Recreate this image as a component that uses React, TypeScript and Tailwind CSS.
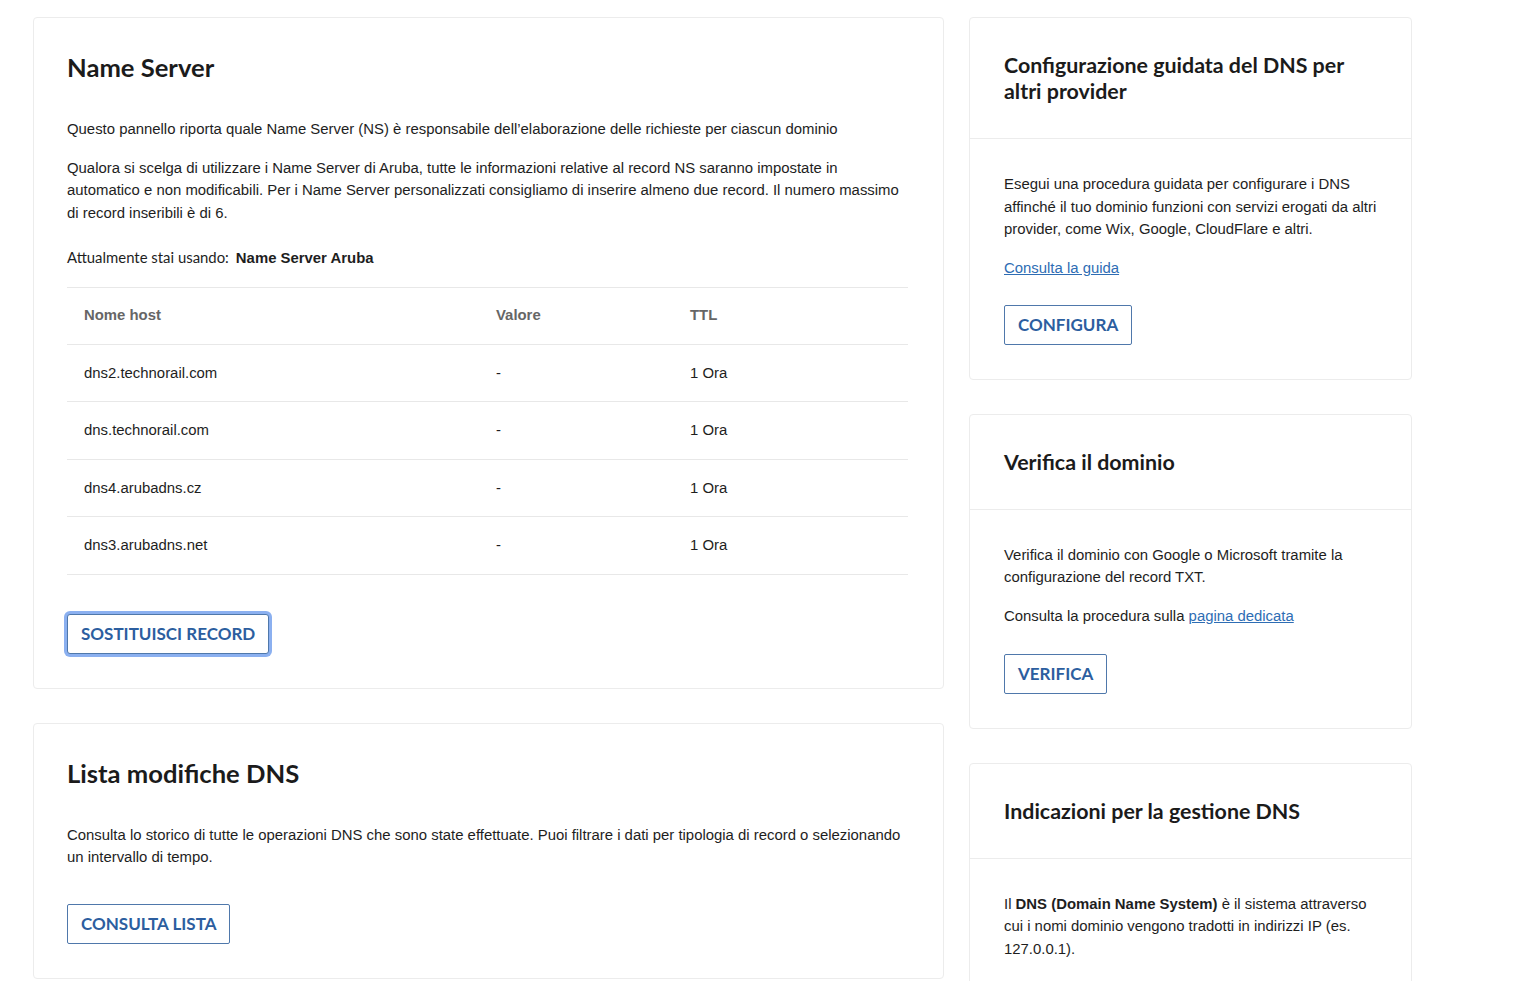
import React from "react";

const lato = { fontFamily: "Lato, 'Open Sans', sans-serif" };

function Btn({ children, focus = false }: { children: React.ReactNode; focus?: boolean }) {
  return (
    <button
      className={
        "h-[40px] px-[13px] border border-[#4f78ab] rounded-[2px] bg-white text-[#2c5e9f] text-[17px] font-bold leading-none " +
        (focus ? "ring-[3px] ring-[#8bb0f0] rounded-[3px]" : "")
      }
      style={lato}
    >
      {children}
    </button>
  );
}

const rows = [
  ["dns2.technorail.com", "-", "1 Ora"],
  ["dns.technorail.com", "-", "1 Ora"],
  ["dns4.arubadns.cz", "-", "1 Ora"],
  ["dns3.arubadns.net", "-", "1 Ora"],
];

function SideCard({ title, children }: { title: React.ReactNode; children: React.ReactNode }) {
  return (
    <div className="bg-white border border-[#ececec] rounded-[4px]">
      <div className="px-[34px] pt-[34px] pb-[34px] border-b border-[#ececec]">
        <h2 className="text-[21.4px] leading-[26px] font-bold text-[#1b1b1b]" style={lato}>
          {title}
        </h2>
      </div>
      <div className="pl-[34px] pr-[30px] pt-[34px] pb-[34px]">{children}</div>
    </div>
  );
}

export default function App() {
  return (
    <div
      className="min-h-screen bg-white text-[#1e1e1e] text-[14.9px] leading-[22.5px]"
      style={{ fontFamily: "'Liberation Sans', Arial, sans-serif" }}
    >
      <div className="flex items-start gap-[25px] pl-[33px] pt-[17px]">
        {/* left column */}
        <div className="w-[911px] flex flex-col gap-[34px]">
          <div className="bg-white border border-[#ececec] rounded-[4px] px-[33px] pt-[32px] pb-[34px]">
            <h1 className="text-[25.6px] leading-[34px] font-bold text-[#1b1b1b]" style={lato}>
              Name Server
            </h1>
            <p className="mt-[34px]">
              Questo pannello riporta quale Name Server (NS) è responsabile dell’elaborazione delle richieste per ciascun dominio
            </p>
            <p className="mt-[16px] pr-[4px]">
              Qualora si scelga di utilizzare i Name Server di Aruba, tutte le informazioni relative al record NS saranno impostate in automatico e non modificabili. Per i Name Server personalizzati consigliamo di inserire almeno due record. Il numero massimo di record inseribili è di 6.
            </p>
            <p className="mt-[22px]">
              <span style={lato}>Attualmente stai usando:</span>
              <span className="font-bold ml-[7px]">Name Server Aruba</span>
            </p>
            <table className="mt-[17px] w-[841px] border-collapse">
              <thead>
                <tr className="border-t border-b border-[#e8e8e8]">
                  <th className="w-[429px] h-[57px] pl-[17px] text-left font-bold text-[#666666]">Nome host</th>
                  <th className="w-[194px] text-left font-bold text-[#666666]">Valore</th>
                  <th className="text-left font-bold text-[#666666]">TTL</th>
                </tr>
              </thead>
              <tbody>
                {rows.map((r) => (
                  <tr key={r[0]} className="border-b border-[#e8e8e8]">
                    <td className="h-[57.5px] pl-[17px]">{r[0]}</td>
                    <td>{r[1]}</td>
                    <td>{r[2]}</td>
                  </tr>
                ))}
              </tbody>
            </table>
            <div className="mt-[39px]">
              <Btn focus>SOSTITUISCI RECORD</Btn>
            </div>
          </div>

          <div className="bg-white border border-[#ececec] rounded-[4px] px-[33px] pt-[32px] pb-[34px]">
            <h2 className="text-[25.6px] leading-[34px] font-bold text-[#1b1b1b]" style={lato}>
              Lista modifiche DNS
            </h2>
            <p className="mt-[34px]">
              Consulta lo storico di tutte le operazioni DNS che sono state effettuate. Puoi filtrare i dati per tipologia di record o selezionando un intervallo di tempo.
            </p>
            <div className="mt-[35px]">
              <Btn>CONSULTA LISTA</Btn>
            </div>
          </div>
        </div>

        {/* right column */}
        <div className="w-[443px] flex flex-col gap-[34px]">
          <SideCard title={<>Configurazione guidata del DNS per<br />altri provider</>}>
            <p>
              Esegui una procedura guidata per configurare i DNS affinché il tuo dominio funzioni con servizi erogati da altri provider, come Wix, Google, CloudFlare e altri.
            </p>
            <p className="mt-[16.5px]">
              <a href="#" className="text-[#2e6db4] underline">Consulta la guida</a>
            </p>
            <div className="mt-[25px]">
              <Btn>CONFIGURA</Btn>
            </div>
          </SideCard>

          <SideCard title="Verifica il dominio">
            <p className="pr-[30px]">
              Verifica il dominio con Google o Microsoft tramite la configurazione del record TXT.
            </p>
            <p className="mt-[16.5px]">
              Consulta la procedura sulla{" "}
              <a href="#" className="text-[#2e6db4] underline">pagina dedicata</a>
            </p>
            <div className="mt-[26px]">
              <Btn>VERIFICA</Btn>
            </div>
          </SideCard>

          <SideCard title="Indicazioni per la gestione DNS">
            <p>
              Il <b>DNS (Domain Name System)</b> è il sistema attraverso cui i nomi dominio vengono tradotti in indirizzi IP (es. 127.0.0.1).
            </p>
          </SideCard>
        </div>
      </div>
    </div>
  );
}
